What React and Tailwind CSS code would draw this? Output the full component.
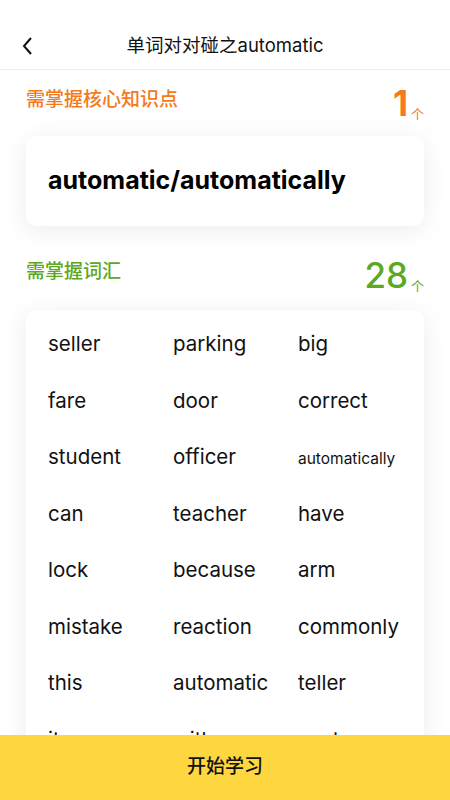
import React from 'react';

const words = [
  'seller', 'parking', 'big',
  'fare', 'door', 'correct',
  'student', 'officer', 'automatically',
  'can', 'teacher', 'have',
  'lock', 'because', 'arm',
  'mistake', 'reaction', 'commonly',
  'this', 'automatic', 'teller',
  'it', 'with', 'custom',
];

const font = { fontFamily: 'Inter, "Noto Sans CJK SC", sans-serif' };

export default function App() {
  return (
    <div className="relative h-[800px] w-[450px] overflow-hidden bg-white" style={font}>
      {/* 顶部导航 */}
      <div className="relative flex h-[70px] items-center justify-center border-b border-[#ececec]">
        <svg className="absolute left-[20px] top-[36px]" width="16" height="20" viewBox="0 0 16 20">
          <path d="M11 2 L4 10 L11 18" fill="none" stroke="#111" strokeWidth="2" />
        </svg>
        <h1 className="mt-[22px] text-[18.5px] text-[#111]">单词对对碰之automatic</h1>
      </div>

      <div className="px-[26px]">
        {/* 核心知识点 */}
        <div className="flex h-[60px] items-center justify-between">
          <span className="text-[19px] font-medium text-[#f47a1c]">需掌握核心知识点</span>
          <span className="mt-[6px] flex items-end text-[#f47a1c]">
            <span className="text-[35px] font-bold leading-none">1</span>
            <span className="ml-[3px] text-[13px] leading-none">个</span>
          </span>
        </div>
        <div className="mt-[6px] flex h-[90px] items-center rounded-[10px] bg-white px-[22px] shadow-[0_4px_24px_rgba(0,0,0,0.08)]">
          <span className="text-[25px] font-bold text-black">automatic/automatically</span>
        </div>

        {/* 词汇 */}
        <div className="mt-[16px] flex h-[60px] items-center justify-between">
          <span className="text-[19px] font-medium text-[#5ca81e]">需掌握词汇</span>
          <span className="mt-[6px] flex items-end text-[#5ca81e]">
            <span className="text-[35px] font-medium leading-none">28</span>
            <span className="ml-[3px] text-[13px] leading-none">个</span>
          </span>
        </div>
        <div className="mt-[8px] rounded-[10px] bg-white px-[22px] pt-[19px] shadow-[0_4px_24px_rgba(0,0,0,0.08)]">
          <div className="grid grid-cols-[125px_125px_1fr]">
            {words.map((w, i) => (
              <div key={i} className="flex h-[56.5px] items-start">
                <span className={w === 'automatically' ? 'mt-[5px] text-[15.5px] text-[#111]' : 'text-[20.5px] text-[#111]'}>{w}</span>
              </div>
            ))}
          </div>
        </div>
      </div>

      {/* 底部按钮 */}
      <button className="absolute bottom-0 left-0 flex h-[65px] w-full items-center justify-center bg-[#fed640] text-[19px] font-medium text-[#111]">
        开始学习
      </button>
    </div>
  );
}
